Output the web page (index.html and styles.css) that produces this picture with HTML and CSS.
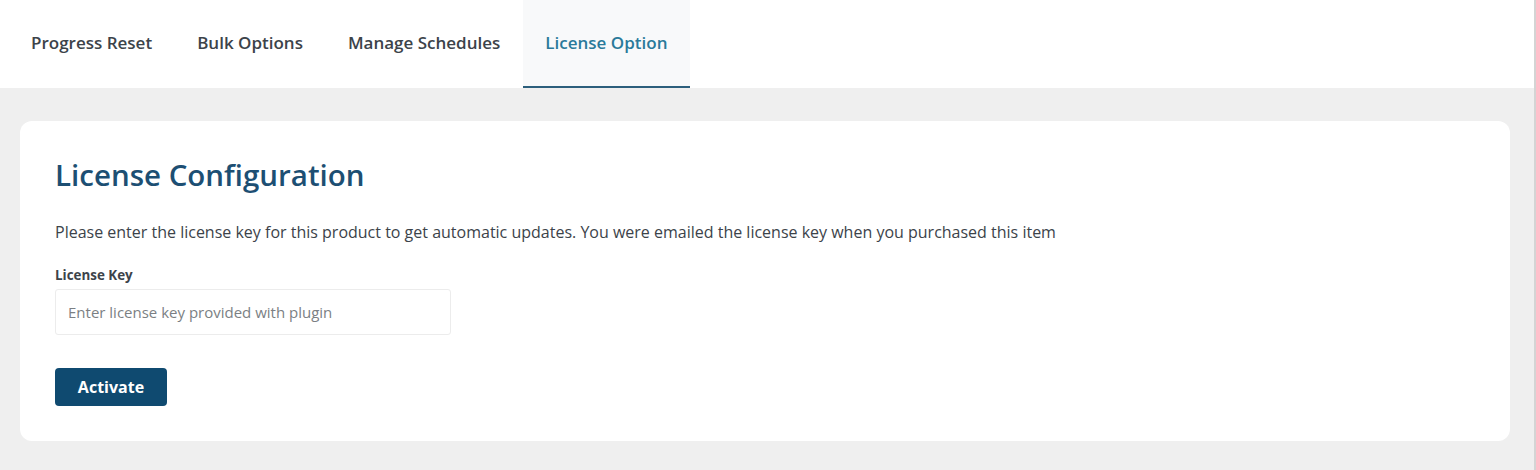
FILE: index.html
```html
<!DOCTYPE html>
<html lang="en">
<head>
    <meta charset="UTF-8">
    <meta name="viewport" content="width=device-width, initial-scale=1.0">
    <title>License Option</title>
    <link rel="stylesheet" href="styles.css">
</head>
<body>

    <nav class="tabs">
        <a href="#" class="tab">Progress Reset</a>
        <a href="#" class="tab">Bulk Options</a>
        <a href="#" class="tab">Manage Schedules</a>
        <a href="#" class="tab active">License Option</a>
    </nav>

    <main class="content">
        <div class="card">
            <h2>License Configuration</h2>
            <p class="intro">Please enter the license key for this product to get automatic updates. You were emailed the license key when you purchased this item</p>
            <form class="license-form">
                <label for="licenseKey">License Key</label>
                <input type="text" id="licenseKey" name="licenseKey" placeholder="Enter license key provided with plugin">
                <button type="submit">Activate</button>
            </form>
        </div>
    </main>

</body>
</html>
```

FILE: styles.css
```css
body {
    font-family: "Open Sans", "Noto Sans", sans-serif;
    background: #efefef;
    margin: 0;
    height: 470px;
    border-right: 2px solid #d4d4d4;
    box-sizing: border-box;
}
.tabs {
    display: flex;
    background: #fff;
    height: 88px;
    padding-left: 8.5px;
}
.tab {
    display: flex;
    align-items: center;
    padding: 0 22.5px 2px;
    font-size: 17px;
    font-weight: 600;
    color: #3c434a;
    text-decoration: none;
    border-bottom: 2px solid transparent;
}
.tab.active {
    background: #f8f9fa;
    color: #2a7a9a;
    border-bottom-color: #2c5f7c;
}
.content {
    padding: 33px 24px 0 20px;
}
.card {
    background: #fff;
    border-radius: 12px;
    padding: 36px 35px 35px;
    height: 320px;
    box-sizing: border-box;
}
h2 {
    margin: 0;
    font-size: 29.5px;
    font-weight: 600;
    color: #1d4f73;
    line-height: 36px;
}
.intro {
    margin: 28px 0 0;
    font-size: 16px;
    color: #3c434a;
    line-height: 22px;
}
.license-form {
    display: flex;
    flex-direction: column;
    align-items: flex-start;
}
label {
    margin-top: 24px;
    font-size: 13.4px;
    font-weight: 700;
    color: #3c434a;
    line-height: 16px;
}
input {
    margin-top: 6px;
    width: 396px;
    height: 46px;
    padding: 0 12px;
    box-sizing: border-box;
    border: 1px solid #ececec;
    border-radius: 3px;
    font-family: inherit;
    font-size: 15px;
    outline: none;
}
input::placeholder {
    color: #7b7f84;
}
button {
    margin-top: 33px;
    width: 112px;
    height: 38px;
    background: #0f4a70;
    color: #fff;
    border: none;
    border-radius: 4px;
    font-family: inherit;
    font-size: 16px;
    font-weight: 700;
    cursor: pointer;
}
```
